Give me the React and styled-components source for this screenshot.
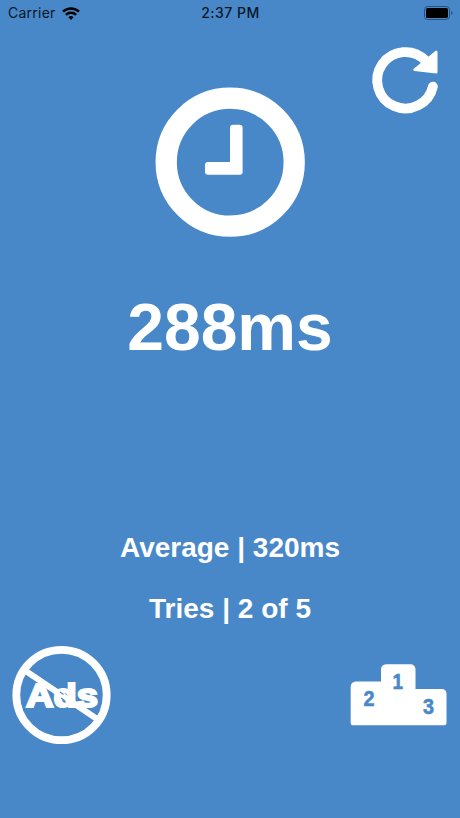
import React from "react";
import styled, { createGlobalStyle } from "styled-components";

const BLUE = "#4888c9";

const GlobalStyle = createGlobalStyle`
  * { box-sizing: border-box; }
  body { margin: 0; background: ${BLUE}; }
  svg { display: block; overflow: visible; flex: none; }
`;

const Screen = styled.main`
  display: flex;
  flex-direction: column;
  width: 460px;
  height: 818px;
  overflow: hidden;
  background: ${BLUE};
  color: #fff;
  font-family: "Liberation Sans", Arial, sans-serif;
`;

const StatusBar = styled.header`
  display: grid;
  grid-template-columns: 1fr auto 1fr;
  align-items: center;
  height: 26px;
  padding: 0 7px 0 8px;
  color: #081626;
  font-family: Inter, sans-serif;
  font-size: 14px;
  line-height: 26px;
`;

const Carrier = styled.div`
  display: flex;
  align-items: center;
  gap: 6px;
  letter-spacing: 0.25px;
`;

const Time = styled.time`
  font-weight: 500;
  font-size: 14px;
  letter-spacing: 0.5px;
`;

const BatterySlot = styled.div`
  display: flex;
  justify-content: flex-end;
  margin-top: -1px;
`;

const IconButton = styled.button`
  display: block;
  padding: 0;
  border: 0;
  background: none;
  color: inherit;
`;

const TopActions = styled.div`
  display: flex;
  justify-content: flex-end;
  height: 61px;
  padding: 21px 22px 0 0;
`;

const ClockArea = styled.div`
  display: flex;
  justify-content: center;
  height: 151px;
`;

const Result = styled.h1`
  margin: 51px 0 0;
  height: 76px;
  font-size: 66px;
  line-height: 76px;
  font-weight: 700;
  text-align: center;
`;

const Stats = styled.section`
  display: flex;
  flex-direction: column;
  gap: 29px;
  margin-top: 167px;
`;

const Stat = styled.p`
  margin: 0;
  font-size: 28px;
  line-height: 32px;
  font-weight: 700;
  text-align: center;
`;

const BottomActions = styled.nav`
  display: flex;
  justify-content: space-between;
  align-items: flex-start;
  margin-top: 21px;
  padding: 0 13px 0 12px;
`;

const PodiumButton = styled(IconButton)`
  margin-top: 18px;
`;

const Label = styled.text`
  font-family: "Liberation Sans", Arial, sans-serif;
  font-weight: 700;
`;

const WifiIcon = () => (
  <svg width="18" height="13" viewBox="0 0 18 13" fill="none" stroke="#000" strokeWidth="2.5">
    <path d="M1 4.7a11.4 11.4 0 0 1 16 0" />
    <path d="M3.9 7.8a7.2 7.2 0 0 1 10.2 0" />
    <path d="M9 13 6.4 10.3a3.7 3.7 0 0 1 5.2 0Z" fill="#000" stroke="none" />
  </svg>
);

const BatteryIcon = () => (
  <svg width="29" height="14" viewBox="0 0 29 14">
    <rect x=".5" y=".5" width="25" height="13" rx="3.2" fill="none" stroke="#2b5178" />
    <rect x="2" y="2" width="22" height="10" rx="1.6" fill="#000" />
    <path d="M27.2 5v4q1.4-.6 1.4-2t-1.4-2" fill="#2b5178" />
  </svg>
);

const RefreshIcon = () => (
  <svg width="66" height="67" viewBox="0 0 66 67" fill="none">
    <path d="M60.9 39.6A28.2 28.2 0 1 1 53.5 13.5" stroke="#fff" strokeWidth="9.8" strokeLinecap="round" />
    <path d="M64.2 5V25.2L42.6 22.8Z" fill="#fff" stroke="#fff" strokeWidth="2.6" strokeLinejoin="round" />
  </svg>
);

const ClockIcon = () => (
  <svg width="150" height="150" viewBox="0 0 150 150" fill="none">
    <circle cx="75.2" cy="75.2" r="64" stroke="#fff" strokeWidth="21.3" />
    <path
      d="M78 37.7h6.6a3 3 0 0 1 3 3V85a2.7 2.7 0 0 1-2.7 2.7H53a3 3 0 0 1-3-3V78a3 3 0 0 1 3-3h22V40.7a3 3 0 0 1 3-3Z"
      fill="#fff"
    />
  </svg>
);

const NoAdsIcon = () => (
  <svg width="99" height="99" viewBox="0 0 99 99" fill="#fff">
    <circle cx="49.5" cy="49" r="45.2" fill="none" stroke="#fff" strokeWidth="7.8" />
    <path d="M13 24.5 86.5 74" stroke="#fff" strokeWidth="6.2" />
    <Label x="14" y="61.2" fontSize="34" textLength="72" lengthAdjust="spacingAndGlyphs" stroke="#fff" strokeWidth="2.2">
      Ads
    </Label>
    <path d="m48 46 3.5 2.5M49 52l4 3" stroke={BLUE} strokeWidth="1.1" />
  </svg>
);

const PodiumIcon = () => (
  <svg width="97" height="62" viewBox="0 0 97 62" fill={BLUE}>
    <path
      d="M5.5 17.5H31V5.5A5 5 0 0 1 36 .3H60.5A5 5 0 0 1 65.5 5.3V25H92A4.5 4.5 0 0 1 96.5 29.5V59.5A2 2 0 0 1 94.5 61.2H2.5A2 2 0 0 1 .7 59.5V22.5A5 5 0 0 1 5.5 17.5Z"
      fill="#fff"
    />
    <g stroke={BLUE} strokeWidth=".6">
      <Label x="42.5" y="24.8" fontSize="21.5" textLength="10.5" lengthAdjust="spacingAndGlyphs">1</Label>
      <Label x="13.4" y="42" fontSize="21.5" textLength="11" lengthAdjust="spacingAndGlyphs">2</Label>
      <Label x="73" y="50.2" fontSize="21.5" textLength="11" lengthAdjust="spacingAndGlyphs">3</Label>
    </g>
  </svg>
);

export default function App() {
  return (
    <>
      <GlobalStyle />
      <Screen>
        <StatusBar>
          <Carrier>Carrier <WifiIcon /></Carrier>
          <Time>2:37 PM</Time>
          <BatterySlot><BatteryIcon /></BatterySlot>
        </StatusBar>
        <TopActions>
          <IconButton aria-label="Restart"><RefreshIcon /></IconButton>
        </TopActions>
        <ClockArea><ClockIcon /></ClockArea>
        <Result>288ms</Result>
        <Stats>
          <Stat>Average | 320ms</Stat>
          <Stat>Tries | 2 of 5</Stat>
        </Stats>
        <BottomActions>
          <IconButton aria-label="Remove ads"><NoAdsIcon /></IconButton>
          <PodiumButton aria-label="Leaderboard"><PodiumIcon /></PodiumButton>
        </BottomActions>
      </Screen>
    </>
  );
}
